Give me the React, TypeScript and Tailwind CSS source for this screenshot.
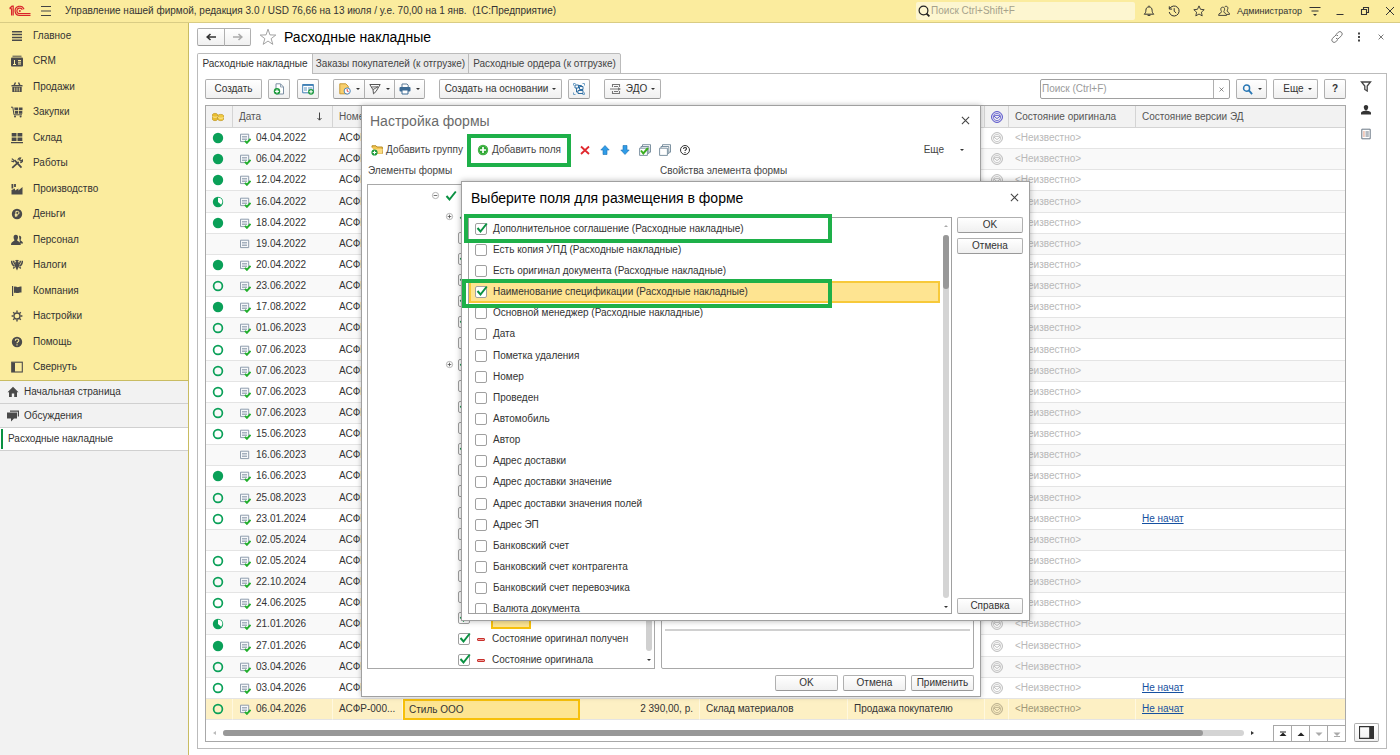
import type { ReactNode } from "react";
import clsx from "clsx";

type Status = "full" | "part" | "empty" | "none";

const INK = "#4a4a4a";

function Svg({ size = 12, box = 12, className, children }: { size?: number; box?: number; className?: string; children: ReactNode }) {
  return (
    <svg width={size} height={size} viewBox={`0 0 ${box} ${box}`} className={clsx("shrink-0", className)} fill="none" aria-hidden="true">
      {children}
    </svg>
  );
}

const menu: { label: string; icon: ReactNode }[] = [
  { label: "Главное", icon: <path d="M1 1.8h10M1 4.6h10M1 7.4h10M1 10.2h10" stroke={INK} strokeWidth="1.5" /> },
  {
    label: "CRM",
    icon: (
      <>
        <path d="M1.5 1.2h9" stroke={INK} />
        <rect x="0" y="2.4" width="12" height="9" rx="1" fill={INK} />
        <path d="M2 9.5h3M3.5 5v4M7 5.5h3M7 7.2h3M7 9h3" stroke="#fbec9e" />
      </>
    ),
  },
  {
    label: "Продажи",
    icon: (
      <>
        <path d="M.5 4.8h11M3 4.5 4.5 1.5M9 4.5 7.5 1.5" stroke={INK} strokeWidth="1.4" />
        <path d="M1.3 6h9.4v5H1.3z" fill={INK} />
        <path d="M3.7 6.5v4M6 6.5v4M8.3 6.5v4" stroke="#fbec9e" strokeWidth=".8" />
      </>
    ),
  },
  {
    label: "Закупки",
    icon: (
      <>
        <path d="M0 1.2h1.8L3 8.8h8" stroke={INK} />
        <path d="M3.3 1.5H7v2.8H3.6zM7.8 1.5H11.5v2.8H7.8zM3.8 5.1H7v2.7H4zM7.8 5.1h3.5v2.7H7.8z" fill={INK} />
        <circle cx="4" cy="10.6" r="1" fill={INK} />
        <circle cx="9.6" cy="10.6" r="1" fill={INK} />
      </>
    ),
  },
  { label: "Склад", icon: <path d="M.7 1h4.8v3.6H.7zM6.5 1h4.8v3.6H6.5zM.7 5.4h4.8V9H.7zM6.5 5.4h4.8V9H6.5zM0 10h12v1.3H0z" fill={INK} /> },
  {
    label: "Работы",
    icon: (
      <>
        <path d="m1.2 10.8 6.5-6M3.5 3.2l7 7.4" stroke={INK} strokeWidth="1.7" />
        <path d="M.8 1.6 3 3.4 2.4 4.8.3 4M7 3.2C7 1.5 8.2.8 9.6 1L8.6 2.8l1.2 1.1 1.8-1c.2 1.6-1 2.8-2.4 2.6" stroke={INK} strokeWidth="1.2" />
      </>
    ),
  },
  {
    label: "Производство",
    icon: (
      <>
        <path d="M.5 11.5V7L4 5.5v2l3.4-2v2L11.5 4v7.5z" fill={INK} />
        <path d="M1.4 1v4.5M4 1v3" stroke={INK} strokeWidth="1.8" />
      </>
    ),
  },
  {
    label: "Деньги",
    icon: (
      <>
        <circle cx="6" cy="6" r="5.2" fill={INK} />
        <path d="M4.9 9V3.4h1.6a1.5 1.5 0 0 1 0 3H3.8M3.8 7.7h2.8" stroke="#fbec9e" />
      </>
    ),
  },
  {
    label: "Персонал",
    icon: (
      <>
        <path d="M8 1.8c1.5-.3 2.4.7 2.2 2.2-.1 1-.6 1.6-.6 2.2 0 .8 2.4.9 2.4 3.2H9z" fill={INK} />
        <path d="M4.8.8C6.4.8 7.2 2 7 3.7c-.1 1.2-.8 1.8-.8 2.6 0 1.2 3.6 1 3.6 4.7H0c0-3.7 3.4-3.5 3.4-4.7 0-.8-.7-1.4-.8-2.6C2.4 2 3.2.8 4.8.8z" fill={INK} />
      </>
    ),
  },
  {
    label: "Налоги",
    icon: (
      <>
        <path d="M.6 1.8c.2 3 1.2 4.7 3 5.2M2.6 1.8c.1 2 .8 3.2 1.8 3.8M11.4 1.8c-.2 3-1.2 4.7-3 5.2M9.4 1.8c-.1 2-.8 3.2-1.8 3.8M4.6 1.2 6 2.4l1.4-1.2" stroke={INK} strokeWidth="1.5" />
        <path d="M4.4 3h3.2l.6 4-1 2L6 11.4 4.8 9l-1-2z" fill={INK} />
        <path d="m3.5 8-1.2 1.5M8.5 8l1.2 1.5" stroke={INK} strokeWidth="1.3" />
      </>
    ),
  },
  { label: "Компания", icon: <path d="M1 1h1.2v10H1zM3 1.8c1.5-1 3 .8 4.6.2.8-.3 1.2-.6 2.9-.4v6c-1.7-.2-2.2.2-3 .4C6 8.4 4.5 7 3 8z" fill={INK} /> },
  {
    label: "Настройки",
    icon: (
      <>
        <circle cx="6" cy="6" r="3" stroke={INK} strokeWidth="1.3" />
        <path d="M6 .6v2M6 9.4v2M.6 6h2M9.4 6h2M2.2 2.2l1.3 1.3M8.5 8.5l1.3 1.3M2.2 9.8l1.3-1.3M8.5 3.5l1.3-1.3" stroke={INK} strokeWidth="1.4" />
      </>
    ),
  },
  {
    label: "Помощь",
    icon: (
      <>
        <circle cx="6" cy="6" r="5.2" fill={INK} />
        <path d="M4.3 4.7c0-2.2 3.5-2.2 3.5-.1C7.8 5.9 6 5.8 6 7.2M6 8.3v1.2" stroke="#fbec9e" strokeWidth="1.1" />
      </>
    ),
  },
  {
    label: "Свернуть",
    icon: (
      <>
        <rect x=".7" y="1.2" width="10.6" height="9.8" stroke={INK} strokeWidth="1.1" />
        <path d="M1 1.5h3V11H1z" fill={INK} />
      </>
    ),
  },
];

// status, date, draft, has e-document state
const rows: [Status, string, boolean?, boolean?][] = [
  ["full", "04.04.2022"],
  ["full", "06.04.2022"],
  ["full", "12.04.2022"],
  ["part", "16.04.2022"],
  ["full", "18.04.2022"],
  ["none", "19.04.2022", true],
  ["full", "20.04.2022"],
  ["empty", "23.06.2022"],
  ["full", "17.08.2022"],
  ["empty", "01.06.2023"],
  ["empty", "07.06.2023"],
  ["empty", "07.06.2023"],
  ["empty", "07.06.2023"],
  ["empty", "07.06.2023"],
  ["empty", "15.06.2023"],
  ["none", "16.06.2023", true],
  ["full", "16.06.2023"],
  ["empty", "25.08.2023"],
  ["empty", "23.01.2024", false, true],
  ["none", "02.05.2024"],
  ["empty", "02.05.2024"],
  ["empty", "22.10.2024"],
  ["empty", "24.06.2025"],
  ["part", "21.01.2026"],
  ["full", "27.01.2026"],
  ["empty", "03.04.2026"],
  ["empty", "03.04.2026", false, true],
  ["empty", "06.04.2026", false, true],
];

const fields = [
  "Дополнительное соглашение (Расходные накладные)",
  "Есть копия УПД (Расходные накладные)",
  "Есть оригинал документа (Расходные накладные)",
  "Наименование спецификации (Расходные накладные)",
  "Основной менеджер (Расходные накладные)",
  "Дата",
  "Пометка удаления",
  "Номер",
  "Проведен",
  "Автомобиль",
  "Автор",
  "Адрес доставки",
  "Адрес доставки значение",
  "Адрес доставки значения полей",
  "Адрес ЭП",
  "Банковский счет",
  "Банковский счет контрагента",
  "Банковский счет перевозчика",
  "Валюта документа",
];

// Tick state of the form elements from the third tree row down
const treeChecks = [false, true, true, true, true, false, true, false, true, false, true, false, false, false, false, false, false, false, true, true, true];

function StatusDot({ status }: { status: Status }) {
  if (status === "none") return null;
  return (
    <Svg className="ml-[6px] block">
      {status === "full" && <circle cx="6" cy="6" r="5.2" fill="#0aa058" />}
      {status === "empty" && <circle cx="6" cy="6" r="4.4" stroke="#0aa058" strokeWidth="1.7" />}
      {status === "part" && (
        <>
          <circle cx="6" cy="6" r="5.2" fill="#0aa058" />
          <path d="M6 1.8V6l3.2 2.7A4 4 0 0 0 6 1.8z" fill="#fff" />
        </>
      )}
    </Svg>
  );
}

function DocIcon({ posted }: { posted: boolean }) {
  return (
    <Svg>
      <path d="M1.5 2.2h8.2v7.4H1.5z" stroke="#8f9dad" fill="#f6f8fa" />
      <path d="M3 4.5h5M3 6h5M3 7.5h5" stroke="#8f9dad" strokeWidth=".8" />
      {posted && <path d="m6 8.8 1.9 2 3.6-4" stroke="#22b02c" strokeWidth="1.9" />}
    </Svg>
  );
}

function Stamp({ color }: { color: string }) {
  return (
    <Svg className="mx-auto block">
      <circle cx="6" cy="6" r="5.4" stroke={color} />
      <circle cx="6" cy="6" r="3.7" stroke={color} strokeWidth=".7" />
      <path d="M3 5.2c1.5-1.2 4.5-1.2 6 0L6 7.6z" stroke={color} strokeWidth=".9" />
    </Svg>
  );
}

function Tick({ className }: { className?: string }) {
  return (
    <Svg className={className}>
      <path d="m1.5 6 3 3.5 6.3-8" stroke="#0a9142" strokeWidth="2" />
    </Svg>
  );
}

function CheckBox({ id, label, checked }: { id: string; label?: string; checked: boolean }) {
  return (
    <span className="relative size-3 shrink-0">
      <input
        id={id}
        type="checkbox"
        aria-label={label}
        defaultChecked={checked}
        className="peer block size-3 appearance-none rounded-[2px] border border-[#a0a0a0] bg-white"
      />
      <Tick className="pointer-events-none absolute -top-px left-px hidden peer-checked:block" />
    </span>
  );
}

function Caret({ className }: { className?: string }) {
  return <span className={clsx("inline-block h-0 w-0 border-x-2 border-t-2 border-x-transparent border-t-[#333]", className)} />;
}

function Btn({ children, className, label }: { children: ReactNode; className?: string; label?: string }) {
  return (
    <button
      type="button"
      aria-label={label}
      className={clsx(
        "flex items-center justify-center rounded-[2px] border border-[#b0b0b0] border-b-[#999] bg-linear-to-b from-white to-[#f0f0f0] text-[#333]",
        className,
      )}
    >
      {children}
    </button>
  );
}

function Cross({ size = 9, color = "#444" }: { size?: number; color?: string }) {
  return (
    <Svg size={size} box={10}>
      <path d="m1 1 8 8M9 1 1 9" stroke={color} strokeWidth="1.2" />
    </Svg>
  );
}

function TopBar() {
  return (
    <header className="flex h-[23px] shrink-0 items-center border-b border-[#d9cc84] bg-[#fbec9e] text-[#333]">
      <svg width="22" height="12" viewBox="0 0 22 12" fill="none" className="ml-[9px] shrink-0" aria-hidden="true">
        <path d="M.5 3.5 3 1.2h1.2v9.3M2.6 3.4v7.1M.5 3.6h2" stroke="#d9242b" strokeWidth="1.2" />
        <path d="M15 4.2A4.6 4.6 0 1 0 10.6 10.5h10.9M13.3 4.8A2.8 2.8 0 1 0 10.6 8.7h10.9" stroke="#d9242b" strokeWidth="1.2" />
        <circle cx="10.8" cy="5.9" r="1" fill="#d9242b" />
      </svg>
      <button type="button" aria-label="Меню" className="ml-[9px]">
        <Svg>
          <path d="M1 1.5h10M1 6h10M1 10.500h10" stroke="#444" strokeWidth="1.1" />
        </Svg>
      </button>
      <span className="ml-[13px] whitespace-nowrap">Управление нашей фирмой, редакция 3.0 / USD 76,66 на 13 июля / у.е. 70,00 на 1 янв.&nbsp; (1С:Предприятие)</span>
      <label className="ml-auto flex h-[18px] w-[219px] items-center rounded-[2px] bg-[#fdf6d0] pl-[2px]">
        <Svg>
          <circle cx="5.5" cy="5.5" r="4.4" stroke="#222" strokeWidth="1.2" />
          <path d="m8.6 8.6 2.8 2.8" stroke="#222" strokeWidth="1.8" />
        </Svg>
        <input aria-label="Поиск" placeholder="Поиск Ctrl+Shift+F" className="min-w-0 flex-1 pl-px outline-none placeholder:text-[#a6a28c]" />
      </label>
      <div className="ml-2 flex items-center gap-[13px] pr-1">
        <button type="button" aria-label="Уведомления">
          <Svg>
            <path d="M1.2 9.2c1.4-1.2 1.6-2.2 1.7-4C3 3.2 4 1.9 6 1.9s3 1.3 3.1 3.3c.1 1.8.3 2.8 1.7 4zM6 .6v1.2M4.6 10.4h2.8" stroke="#333" />
          </Svg>
        </button>
        <button type="button" aria-label="История">
          <Svg>
            <path d="M1.6 3.8A5 5 0 1 1 1.2 7M1.3 1.3v2.8h2.8M6.2 3.2v3l2 1.8" stroke="#333" />
          </Svg>
        </button>
        <button type="button" aria-label="Избранное">
          <Svg>
            <path d="m6 .9 1.5 3.4 3.7.4-2.8 2.5.8 3.7L6 9l-3.2 1.9.8-3.7L.8 4.7l3.7-.4z" stroke="#333" strokeWidth=".9" />
          </Svg>
        </button>
        <button type="button" aria-label="Пользователи">
          <Svg>
            <path d="M.6 10.4h8c0-2.8-2.8-2-2.8-3.6 0-.8.8-1.2.8-2.6 0-1.2-.7-2-1.9-2s-1.9.8-1.9 2c0 1.4.7 1.8.7 2.6 0 1.6-2.9.8-2.9 3.6zM6.6 2c.4-.5.9-.7 1.5-.7 1.2 0 1.8.8 1.8 2 0 1.3-.8 1.7-.8 2.6 0 1.5 2.4.8 2.4 3.5H9" stroke="#333" strokeWidth=".9" />
          </Svg>
        </button>
        <span className="-mx-[6px] text-[9px]">Администратор</span>
        <button type="button" aria-label="Панели">
          <Svg>
            <path d="M.5 2.5h11M2.5 6h7" stroke="#333" strokeWidth="1.1" />
            <path d="M4 9h4l-2 2z" fill="#333" />
          </Svg>
        </button>
        <button type="button" aria-label="Свернуть окно">
          <Svg>
            <path d="M2.5 9.5h7" stroke="#333" />
          </Svg>
        </button>
        <button type="button" aria-label="Восстановить">
          <Svg>
            <path d="M2.5 4.5h5v5h-5zM4.5 4V2.5h5v5H8" stroke="#333" strokeWidth="1.1" />
          </Svg>
        </button>
        <button type="button" aria-label="Закрыть программу">
          <Svg>
            <path d="m2 2 8 8M10 2l-8 8" stroke="#333" />
          </Svg>
        </button>
      </div>
    </header>
  );
}

function Sidebar() {
  return (
    <aside className="w-[189px] shrink-0 border-r border-[#c9bc62] bg-[#f2f2f2] text-[#333]">
      <nav className="grid h-[358px] auto-rows-fr border-b border-[#c9bc62] bg-[#fbec9e]">
        {menu.map((item) => (
          <a key={item.label} href="#" className="flex items-center gap-[10px] pl-[11px]">
            <Svg>{item.icon}</Svg>
            {item.label}
          </a>
        ))}
      </nav>
      <a href="#" className="flex h-[23px] items-center gap-[5px] border-b border-[#d0d0d0] pl-[7px]">
        <Svg>
          <path d="M6 .8 11.5 6.2H10V11H7.2V7.6H4.8V11H2V6.2H.5z" fill={INK} />
        </Svg>
        Начальная страница
      </a>
      <a href="#" className="flex h-6 items-center gap-[5px] border-b border-[#d0d0d0] pl-[7px]">
        <Svg>
          <path d="M3 .5h9v6h-1.2V1.7H3z" fill={INK} />
          <path d="M0 2.4h10v6.2H7l-3 3v-3H0z" fill={INK} />
        </Svg>
        Обсуждения
      </a>
      <a href="#" className="flex h-[23px] items-center border-b border-[#d0d0d0] bg-white">
        <span className="mr-[5px] ml-px h-5 w-[2px] bg-[#0a9142]" />
        Расходные накладные
      </a>
    </aside>
  );
}

function Toolbar() {
  return (
    <div className="flex h-5 items-stretch">
      <Btn className="w-[57px]">Создать</Btn>
      <Btn label="Создать копированием" className="ml-[6px] w-[22px]">
        <Svg>
          <path d="M3 .8h4.5L10.5 4v7H3z" stroke="#7c8fa3" fill="#fff" />
          <path d="M7.5 1v3h3" stroke="#7c8fa3" strokeWidth=".8" />
          <circle cx="4" cy="8.3" r="3.2" fill="#1c9b3c" />
          <path d="M4 6.4v3.8M2.1 8.3h3.8" stroke="#fff" strokeWidth="1.2" />
        </Svg>
      </Btn>
      <Btn label="Добавить в список" className="ml-[7px] w-[22px]">
        <Svg>
          <path d="M.7 1.5h10.6v8.3H.7z" stroke="#3f7fb5" fill="#fff" />
          <path d="M.7 2h10.6" stroke="#3f7fb5" strokeWidth="1.8" />
          <path d="M2 5h3M6 5h4M2 7h3M6 7h2" stroke="#5c93c0" />
          <circle cx="9" cy="8.8" r="2.9" fill="#1c9b3c" />
          <path d="M9 7v3.6M7.2 8.8h3.6" stroke="#fff" strokeWidth="1.1" />
        </Svg>
      </Btn>
      <div className="ml-[14px] flex">
        <Btn label="Отложить" className="w-8 gap-[5px] rounded-r-none">
          <Svg>
            <path d="M.8.8h6l2.4 2.4v7.6H.8z" stroke="#c79b3a" fill="#f8cf6d" />
            <circle cx="8.2" cy="8" r="3.1" fill="#fff" stroke="#4c86b8" />
            <path d="M8.2 6v2.2l1.5.6" stroke="#d33" strokeWidth=".9" />
          </Svg>
          <Caret />
        </Btn>
        <Btn label="Отправить" className="-ml-px w-[31px] gap-[5px] rounded-none">
          <Svg>
            <path d="M.8 1.5h10.4L7 8.5l-2.5 2.3L4 6.8z" stroke="#555" />
            <path d="m2.5 4 6.500-.2L4 6.600" stroke="#555" strokeWidth=".9" />
          </Svg>
          <Caret />
        </Btn>
        <Btn label="Печать" className="-ml-px w-[31px] gap-[5px] rounded-l-none">
          <Svg>
            <path d="M3 4V1h5l1.2 1.2V4" stroke="#5d7b96" fill="#fff" />
            <rect x=".5" y="4" width="11" height="4.6" rx="1" fill="#3d6b94" />
            <path d="M3 7h6v4H3z" stroke="#3d6b94" fill="#fff" />
          </Svg>
          <Caret />
        </Btn>
      </div>
      <Btn className="ml-[14px] w-[123px] gap-1 whitespace-nowrap">
        Создать на основании <Caret />
      </Btn>
      <Btn label="Структура подчиненности" className="ml-[6px] w-[22px]">
        <Svg>
          <path d="M2.500.5H.5v2M9.500.5h2v2M.5 9.500v2h2M11.500 9.500v2h-2" stroke="#6fa0c6" />
          <path d="M2 2h3.5v3H2zM6.5 3.5H10v3H6.5zM5 7.5h5v3H5zM3.5 5v4H5M5.500 2.500h3v1" stroke="#2f6ea3" />
        </Svg>
      </Btn>
      <Btn className="ml-[14px] w-[57px] gap-1">
        <Svg>
          <path d="M2.5 4V1.500h7V4M2.5 8v2.500h7V8M0 6h8M4 3.500h4M4 8.500h4" stroke="#777" strokeWidth="1.1" />
          <path d="M8 4.200 11 6 8 7.800z" fill="#777" />
        </Svg>
        ЭДО <Caret />
      </Btn>
      <div className="ml-auto flex w-[190px] rounded-[2px] border border-[#a0a0a0] bg-white">
        <input aria-label="Поиск в списке" placeholder="Поиск (Ctrl+F)" className="min-w-0 flex-1 px-px outline-none placeholder:text-[#9a9a9a]" />
        <button type="button" aria-label="Очистить" className="flex w-4 items-center justify-center border-l border-[#b0b0b0]">
          <Cross size={5} />
        </button>
      </div>
      <Btn label="Найти" className="ml-[6px] w-[31px] gap-[5px]">
        <Svg size={11}>
          <circle cx="5" cy="4.5" r="3.3" stroke="#2a78b5" strokeWidth="1.6" />
          <path d="m7.5 7 3.5 4" stroke="#2a78b5" strokeWidth="2" />
        </Svg>
        <Caret />
      </Btn>
      <Btn className="ml-[6px] w-[45px] gap-1 pl-1">
        Еще <Caret />
      </Btn>
      <Btn className="ml-[6px] w-[22px] font-bold">?</Btn>
    </div>
  );
}

function InvoiceTable() {
  const head = "h-[22px] border-r border-b border-[#d4d4d4] bg-[#f2f2f2] p-0 pl-[6px] text-left font-normal text-[#555]";
  return (
    <div className="flex min-h-0 flex-1 flex-col border border-[#a8a8a8] bg-white">
      <div className="min-h-0 flex-1 overflow-hidden">
        <table className="w-full table-fixed border-separate border-spacing-0 whitespace-nowrap">
          <colgroup>
            <col className="w-[27px]" />
            <col className="w-[100px]" />
            <col className="w-[70px]" />
            <col className="w-[177px]" />
            <col className="w-[120px]" />
            <col className="w-[148px]" />
            <col className="w-[137px]" />
            <col className="w-6" />
            <col className="w-[127px]" />
            <col />
          </colgroup>
          <thead>
            <tr>
              <th aria-label="Оплата" className="h-[22px] border-r border-b border-[#d4d4d4] bg-[#f2f2f2] p-0">
                <Svg className="ml-[6px] block">
                  <path d="M.5 3.5C.5 2 5.5 2 5.5 3.5v5c0 1.5-5 1.5-5 0z" fill="#e9bd2f" stroke="#b98d13" strokeWidth=".6" />
                  <path d="M6 4.5C6 3 11.5 3 11.5 4.5v4c0 1.5-5.5 1.5-5.5 0z" fill="#f0c93f" stroke="#b98d13" strokeWidth=".6" />
                  <path d="M.6 5.500c1 1 4 1 5 0M6 6.500c1 1 4.500 1 5.500 0" stroke="#fff3b8" strokeWidth=".8" />
                </Svg>
              </th>
              <th className={head}>
                <div className="flex items-center justify-between pr-2">
                  Дата
                  <Svg size={9} box={9}>
                    <path d="M4.5.5v7.5M2.5 6l2 2.2 2-2.200" stroke="#444" />
                  </Svg>
                </div>
              </th>
              <th className={head}>Номер</th>
              <th className={head} />
              <th className={head} />
              <th className={head} />
              <th className={head} />
              <th aria-label="Оригинал" className="border-r border-b border-[#d4d4d4] bg-[#f2f2f2] p-0">
                <Stamp color="#4b46c8" />
              </th>
              <th className={head}>Состояние оригинала</th>
              <th className="border-b border-[#d4d4d4] bg-[#f2f2f2] p-0 pl-[6px] text-left font-normal text-[#555]">Состояние версии ЭД</th>
            </tr>
          </thead>
          <tbody>
            {rows.map(([status, date, draft, edo], i) => {
              const current = i === rows.length - 1;
              const cell = clsx("overflow-hidden border-b border-[#e4e4e4] p-0", current && "border-r border-r-[#fff8df]");
              return (
                <tr
                  key={i}
                  className={clsx(
                    "text-[#333]",
                    i % 7 === 3 ? "h-[22px]" : "h-[21px]",
                    current ? "bg-[#fdf0c4]" : i % 2 ? "bg-[#f9f9f9]" : "bg-white",
                  )}
                >
                  <td className={cell}>
                    <StatusDot status={status} />
                  </td>
                  <td className={cell}>
                    <div className="flex items-center gap-[5px] pl-[6px]">
                      <DocIcon posted={!draft} />
                      {date}
                    </div>
                  </td>
                  <td className={clsx(cell, "pl-[6px]")}>{current ? "АСФР-000..." : "АСФР"}</td>
                  <td className={current ? "border-2 border-[#f7c00a] bg-[#fde592] p-0 pl-1" : cell}>{current && "Стиль ООО"}</td>
                  <td className={clsx(cell, "pr-[6px] text-right")}>{current && "2 390,00, р."}</td>
                  <td className={clsx(cell, "pl-[6px]")}>{current && "Склад материалов"}</td>
                  <td className={clsx(cell, "pl-[6px]")}>{current && "Продажа покупателю"}</td>
                  <td className={cell}>
                    <Stamp color={current ? "#b3a887" : "#b8b8b8"} />
                  </td>
                  <td className={clsx(cell, "pl-[6px]", current ? "text-[#a09878]" : "text-[#b8b8b8]")}>&lt;Неизвестно&gt;</td>
                  <td className="border-b border-[#e4e4e4] p-0 pl-[6px]">
                    {edo && (
                      <a href="#" className="text-[#1550a0] underline">
                        Не начат
                      </a>
                    )}
                  </td>
                </tr>
              );
            })}
          </tbody>
        </table>
      </div>
      <div className="flex h-[21px] shrink-0 items-end">
        <div className="flex flex-1 items-center self-center pt-1 pr-[19px] pl-[7px]">
          <span className="mr-[7px] border-y-2 border-r-[3px] border-y-transparent border-r-[#bbb]" />
          <div className="h-[6px] flex-1 rounded-full bg-[#d4d4d4]">
            <div className="h-full w-[96%] rounded-full bg-[#989898]" />
          </div>
          <span className="ml-[7px] border-y-2 border-l-[3px] border-y-transparent border-l-[#333]" />
        </div>
        <div className="flex h-4 border-t border-[#a8a8a8]">
          {["В начало", "Вверх", "Вниз", "В конец"].map((label, i) => (
            <button key={label} type="button" aria-label={label} className="flex w-[18px] items-center justify-center border-l border-[#a8a8a8]">
              <Svg size={8} box={8}>
                <path d={i < 2 ? "M.5 6 4 2.500 7.500 6z" : "M.5 2.500 4 6l3.500-3.500z"} fill={i < 2 ? "#222" : "#aaa"} />
                {i === 0 && <path d="M1 2h6" stroke="#222" />}
                {i === 3 && <path d="M1 6.500h6" stroke="#aaa" />}
              </Svg>
            </button>
          ))}
        </div>
      </div>
    </div>
  );
}

function TreeMark({ sign }: { sign: "plus" | "minus" }) {
  return (
    <Svg size={11}>
      <circle cx="6" cy="6" r="3.4" stroke="#999" strokeWidth=".8" />
      <path d={sign === "plus" ? "M4 6h4M6 4v4" : "M4 6h4"} stroke="#555" strokeWidth=".9" />
    </Svg>
  );
}

function FormSetupDialog() {
  return (
    <section role="dialog" aria-label="Настройка формы" className="absolute top-[105px] left-[361px] flex h-[592px] w-[620px] flex-col border border-[#a0a0a0] bg-white shadow-[0_0_5px_rgba(0,0,0,0.25)]">
      <div className="flex h-[29px] items-center justify-between pr-[10px] pl-2">
        <h2 className="text-sm text-[#6a6a6a]">Настройка формы</h2>
        <button type="button" aria-label="Закрыть">
          <Cross />
        </button>
      </div>
      <div className="flex h-[30px] items-center pr-4 pl-[9px] text-[#444]">
        <button type="button" className="flex items-center gap-[3px]">
          <Svg>
            <path d="M1 3.5V1.8h4L6 3h5.300v6.500H5" stroke="#b78a22" fill="#f3c653" />
            <path d="M2.5 5h9.200L11 9.700H4z" fill="#fbdc83" />
            <circle cx="3.5" cy="8.5" r="3.1" fill="#1c9b3c" />
            <path d="M3.5 6.700v3.600M1.700 8.500h3.600" stroke="#fff" strokeWidth="1.1" />
          </Svg>
          Добавить группу
        </button>
        <button type="button" className="ml-1 flex h-[33px] w-[104px] shrink-0 items-center justify-center gap-[3px] border-4 border-[#1eb049]">
          <Svg>
            <circle cx="6" cy="6" r="5.2" fill="#2aa52f" />
            <circle cx="6" cy="6" r="4.3" stroke="#7fd07f" strokeWidth=".5" />
            <path d="M6 3v6M3 6h6" stroke="#fff" strokeWidth="1.7" />
          </Svg>
          Добавить поля
        </button>
        <div className="ml-2 flex items-center gap-2">
          <button type="button" aria-label="Удалить">
            <Svg>
              <path d="m2 2.500 8 7.500M10 2.500 2 10" stroke="#e0282e" strokeWidth="1.8" />
            </Svg>
          </button>
          <button type="button" aria-label="Переместить вверх">
            <Svg>
              <path d="M6 1.500 10.200 6H8v4.500H4V6H1.800z" fill="#2f9ce8" stroke="#1b6fb0" strokeWidth=".6" />
            </Svg>
          </button>
          <button type="button" aria-label="Переместить вниз">
            <Svg>
              <path d="M6 10.500 1.800 6H4V1.500h4V6h2.200z" fill="#2f9ce8" stroke="#1b6fb0" strokeWidth=".6" />
            </Svg>
          </button>
          <button type="button" aria-label="Установить флажки">
            <Svg>
              <path d="M3.500 2.500V.7h8v7.500H9.800M2 4V2.500h7.800v7H8.500" stroke="#6f8797" strokeWidth=".9" />
              <path d="M.6 4.200h7.800v7.200H.6z" stroke="#6f8797" fill="#fff" strokeWidth=".9" />
              <path d="m2 6.500 2.300 3L9 4" stroke="#3aae1f" strokeWidth="2" />
            </Svg>
          </button>
          <button type="button" aria-label="Снять флажки">
            <Svg>
              <path d="M3.500 2.500V.7h8v7.500H9.800M2 4V2.500h7.800v7H8.500" stroke="#6f8797" strokeWidth=".9" />
              <path d="M.6 4.200h7.800v7.200H.6z" stroke="#6f8797" fill="#fff" strokeWidth=".9" />
            </Svg>
          </button>
          <button type="button" aria-label="Справка">
            <Svg>
              <circle cx="6" cy="6" r="4.5" stroke="#333" />
              <path d="M4.500 5c0-2 3-2 3-.2C7.500 5.800 6 5.900 6 7M6 8v1" stroke="#333" strokeWidth="1.1" />
            </Svg>
          </button>
        </div>
        <button type="button" className="ml-auto flex items-center gap-4">
          Еще <Caret />
        </button>
      </div>
      <div className="flex h-[19px] pl-[6px] text-[#444]">
        <span className="w-[292px]">Элементы формы</span>
        <span>Свойства элемента формы</span>
      </div>
      <div className="flex min-h-0 flex-1 gap-[6px] pr-[6px] pl-[5px]">
        <div className="flex w-[288px] overflow-hidden border border-[#a8a8a8]">
          <ul className="grid h-[486px] min-w-0 flex-1 auto-rows-fr text-[#333]">
            <li className="flex items-center gap-1 pl-[62px]">
              <TreeMark sign="minus" />
              <Tick />
            </li>
            <li className="flex items-center gap-1 pl-[76px]">
              <TreeMark sign="plus" />
              <Tick />
            </li>
            {treeChecks.map((checked, i) => {
              const last = treeChecks.length - 1;
              const label = i === last ? "Состояние оригинала" : i === last - 1 ? "Состояние оригинал получен" : "";
              return (
                <li key={i} className={clsx("flex items-center gap-[3px]", i === 6 ? "pl-[76px]" : "pl-[90px]")}>
                  {i === 6 && <TreeMark sign="plus" />}
                  <CheckBox id={`tree-${i}`} label={label ? undefined : "Элемент формы"} checked={checked} />
                  {i === last - 2 && <span className="ml-[18px] h-full w-10 border-2 border-[#f7c00a] bg-[#fde592]" />}
                  {label && (
                    <>
                      <span className="mr-1 ml-1 h-[3px] w-2 rounded-[1px] border border-[#c9302c] bg-[#f0a09c]" />
                      <label htmlFor={`tree-${i}`} className="whitespace-nowrap">
                        {label}
                      </label>
                    </>
                  )}
                </li>
              );
            })}
          </ul>
          <div className="flex w-[11px] flex-col items-center pb-[7px]">
            <div className="w-[6px] flex-1 rounded-full bg-[#d0d0d0]" />
            <Caret className="mt-2" />
          </div>
        </div>
        <div className="flex flex-1 flex-col justify-end rounded-[2px] border border-[#a8a8a8] px-[3px] pb-[37px]">
          <hr className="border-t-2 border-[#d0d0d0]" />
        </div>
      </div>
      <div className="flex h-[27px] items-center justify-end gap-[5px] pr-[6px]">
        <Btn className="h-4 w-[63px]">OK</Btn>
        <Btn className="h-4 w-[63px]">Отмена</Btn>
        <Btn className="h-4 w-[63px]">Применить</Btn>
      </div>
    </section>
  );
}

function FieldPickerDialog() {
  return (
    <section role="dialog" aria-label="Выберите поля для размещения в форме" className="absolute top-[181px] left-[461px] flex h-[440px] w-[569px] flex-col border border-[#a0a0a0] bg-white shadow-[0_0_6px_rgba(0,0,0,0.3)]">
      <div className="flex h-[35px] items-center justify-between pr-[10px] pb-1 pl-[9px]">
        <h2 className="text-sm text-black">Выберите поля для размещения в форме</h2>
        <button type="button" aria-label="Закрыть">
          <Cross />
        </button>
      </div>
      <div className="flex min-h-0 flex-1 gap-[5px] pr-[6px] pb-[6px] pl-[6px]">
        <div className="flex min-w-0 flex-1 overflow-hidden border border-[#a0a0a0]">
          <ul className="grid h-[402px] min-w-0 flex-1 auto-rows-fr text-[#333]">
            {fields.map((field, i) => (
              <li key={field} className={clsx("flex items-center gap-[6px]", i === 3 ? "border-2 border-[#f7c93a] bg-[#fee491] pl-1" : "pl-[6px]")}>
                <CheckBox id={`field-${i}`} checked={i === 0 || i === 3} />
                <label htmlFor={`field-${i}`}>{field}</label>
              </li>
            ))}
          </ul>
          <div className="flex w-[11px] flex-col items-center pt-[7px] pb-[5px]">
            <Caret className="rotate-180 border-t-[#aaa]" />
            <div className="mt-2 mb-2 w-[6px] flex-1 rounded-full bg-[#d4d4d4]">
              <div className="h-[54px] rounded-full bg-[#989898]" />
            </div>
            <Caret />
          </div>
        </div>
        <div className="flex w-[66px] flex-col gap-[5px]">
          <Btn className="h-4">OK</Btn>
          <Btn className="h-4">Отмена</Btn>
          <Btn className="mt-auto h-4">Справка</Btn>
        </div>
      </div>
      <span className="pointer-events-none absolute top-8 left-[2px] h-[29px] w-[368px] border-4 border-[#1eb049]" />
      <span className="pointer-events-none absolute top-[97px] left-0 h-[29px] w-[370px] border-4 border-[#1eb049]" />
    </section>
  );
}

export default function App() {
  return (
    <div className="relative flex h-screen flex-col overflow-hidden bg-white font-['Liberation_Sans',Arial,sans-serif] text-[10px] leading-3">
      <TopBar />
      <div className="flex min-h-0 flex-1">
        <Sidebar />
        <main className="flex min-w-0 flex-1 flex-col pr-[13px] pb-[6px] pl-[8px]">
          <div className="mb-[2px] flex h-7 shrink-0 items-center">
            <div className="flex h-[18px]">
              <Btn label="Назад" className="w-[28px] rounded-r-none">
                <Svg>
                  <path d="M11 6H2.500M5.500 3 2.200 6l3.300 3" stroke="#333" strokeWidth="1.6" />
                </Svg>
              </Btn>
              <Btn label="Вперед" className="-ml-px w-[27px] rounded-l-none">
                <Svg>
                  <path d="M1 6h8.500M6.500 3l3.300 3-3.300 3" stroke="#aaa" strokeWidth="1.6" />
                </Svg>
              </Btn>
            </div>
            <button type="button" aria-label="В избранное" className="ml-2">
              <Svg size={18}>
                <path d="m6 .8 1.300 3.800 3.900.1L8.100 7.100l1.100 3.800L6 8.700l-3.200 2.200 1.100-3.800L.8 4.700l3.900-.1z" stroke="#999" strokeWidth=".6" />
              </Svg>
            </button>
            <h1 className="ml-[7px] text-sm text-black">Расходные накладные</h1>
            <div className="ml-auto flex items-center gap-[10px]">
              <button type="button" aria-label="Ссылка">
                <Svg>
                  <path d="M5 3.500 7.200 1.300a2.200 2.200 0 0 1 3.300 3.300L8 7.200a2 2 0 0 1-3 0M7 8.500l-2.200 2.200a2.200 2.200 0 0 1-3.300-3.300L4 4.800a2 2 0 0 1 3 0" stroke="#666" strokeWidth=".9" />
                </Svg>
              </button>
              <button type="button" aria-label="Действия">
                <Svg>
                  <path d="M5 1.500h2v2H5zM5 5h2v2H5zM5 8.500h2v2H5z" fill="#444" />
                </Svg>
              </button>
              <button type="button" aria-label="Закрыть" className="mx-[3px]">
                <Cross size={6} />
              </button>
            </div>
          </div>
          <div role="tablist" className="-mb-px flex h-[21px] shrink-0 text-[#444]">
            <button type="button" role="tab" aria-selected="true" className="z-10 w-[116px] rounded-tl-[2px] border border-b-0 border-[#bbb] bg-white text-[#333]">
              Расходные накладные
            </button>
            <button type="button" role="tab" aria-selected="false" className="-ml-px w-[157px] border border-[#bbb] bg-[#ebebeb]">
              Заказы покупателей (к отгрузке)
            </button>
            <button type="button" role="tab" aria-selected="false" className="-ml-px w-[153px] rounded-tr-[2px] border border-[#bbb] bg-[#ebebeb]">
              Расходные ордера (к отгрузке)
            </button>
          </div>
          <div className="flex min-h-0 flex-1 border border-[#bbb]">
            <div className="flex min-w-0 flex-1 flex-col gap-[6px] pt-[5px] pb-[6px] pl-[7px]">
              <Toolbar />
              <InvoiceTable />
            </div>
            <div className="flex w-10 flex-col items-center gap-3 pt-[6px] pb-[6px]">
              <button type="button" aria-label="Отбор">
                <Svg>
                  <path d="M1.500 2h9L7.200 6v5L4.800 9.500V6z" stroke="#444" strokeWidth="1.3" />
                </Svg>
              </button>
              <button type="button" aria-label="Контрагент">
                <Svg>
                  <path d="M6 1c1.500 0 2.400 1 2.200 2.600C8 5 7.200 5.400 7.200 6.500H4.800C4.800 5.400 4 5 3.800 3.600 3.600 2 4.500 1 6 1zM1 10.500V9c0-1.500 2-2 4-2h2c2 0 4 .5 4 2v1.500z" fill="#333" />
                </Svg>
              </button>
              <button type="button" aria-label="Сведения">
                <Svg>
                  <path d="M1.800 1.200h8.400v9.600H1.800z" stroke="#6a7785" />
                  <path d="M3.200 4h1.500M3.200 6h1.500M3.200 8h1.500" stroke="#d97a5a" />
                  <path d="M5.500 4h3.300M5.500 6h3.300M5.500 8h3.300" stroke="#6a7785" />
                </Svg>
              </button>
              <Btn label="Боковая панель" className="mt-auto h-[19px] w-[25px]">
                <Svg size={15} box={14}>
                  <path d="M.5 1.500h13v11H.5z" stroke="#333" />
                  <path d="M9.500 1.500h4v11h-4z" fill="#333" />
                </Svg>
              </Btn>
            </div>
          </div>
        </main>
      </div>
      <FormSetupDialog />
      <FieldPickerDialog />
    </div>
  );
}
